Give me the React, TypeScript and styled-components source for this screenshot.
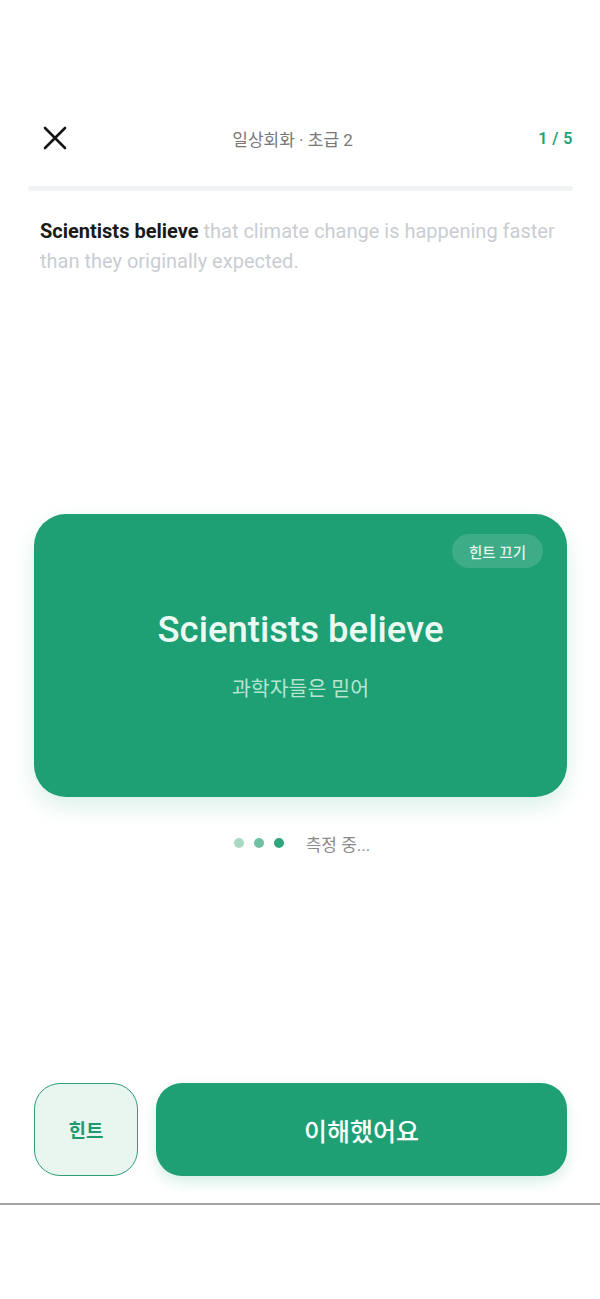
import React from "react";
import styled, { createGlobalStyle } from "styled-components";

const GREEN = "#1e9f74";
const FONT = `Roboto, "Noto Sans CJK KR", "Noto Sans", sans-serif`;

const GlobalStyle = createGlobalStyle`
  html, body {
    margin: 0;
    padding: 0;
    background: #ffffff;
  }
  body {
    font-family: ${FONT};
    -webkit-font-smoothing: antialiased;
  }
`;

// Main Component
const App: React.FC = () => {
  return (
    <Screen>
      <GlobalStyle />
      <Header>
        <CloseButton aria-label="close">
          <svg width="24" height="24" viewBox="0 0 24 24" fill="none">
            <path
              d="M2 2 L22 22 M22 2 L2 22"
              stroke="#151515"
              strokeWidth="2.6"
              strokeLinecap="round"
            />
          </svg>
        </CloseButton>
        <Title>일상회화 · 초급 2</Title>
        <Count>1 / 5</Count>
      </Header>

      <Progress>
        <ProgressFill $value={0} />
      </Progress>

      <Sentence>
        <Strong>Scientists believe</Strong> that climate change is happening
        faster than they originally expected.
      </Sentence>

      <Card>
        <CardTop>
          <Pill>힌트 끄기</Pill>
        </CardTop>
        <Phrase>Scientists believe</Phrase>
        <Meaning>과학자들은 믿어</Meaning>
      </Card>

      <Status>
        <Dots>
          <Dot $tone="#a9d9c5" />
          <Dot $tone="#6fc2a1" />
          <Dot $tone="#2ea57d" />
        </Dots>
        <StatusText>측정 중...</StatusText>
      </Status>

      <Actions>
        <HintButton>힌트</HintButton>
        <MainButton>이해했어요</MainButton>
      </Actions>

      <Divider />
    </Screen>
  );
};

export default App;

//
// --------------------- STYLED COMPONENTS ---------------------
//

const Screen = styled.div`
  width: 600px;
  height: 1299px;
  display: flex;
  flex-direction: column;
  background: #fff;
  overflow: hidden;
`;

const Header = styled.header`
  height: 60px;
  margin-top: 108px;
  padding: 0 27px 0 43px;
  display: flex;
  align-items: center;
`;

const CloseButton = styled.button`
  width: 24px;
  height: 24px;
  padding: 0;
  border: none;
  background: none;
  display: flex;
`;

const Title = styled.div`
  flex: 1;
  text-align: center;
  font-size: 17px;
  color: #777;
  padding-right: 20px;
`;

const Count = styled.div`
  font-size: 16px;
  font-weight: 600;
  color: #22a077;
  letter-spacing: 0.5px;
`;

const Progress = styled.div`
  margin: 18px 27px 0 28px;
  height: 5px;
  border-radius: 3px;
  background: #f1f2f4;
  overflow: hidden;
`;

const ProgressFill = styled.div<{ $value: number }>`
  height: 100%;
  width: ${(p) => p.$value}%;
  background: ${GREEN};
`;

const Sentence = styled.p`
  margin: 25px 36px 0 40px;
  font-size: 20px;
  line-height: 30px;
  color: #c9cdd2;
`;

const Strong = styled.span`
  color: #1a1a1a;
  font-weight: 700;
`;

const Card = styled.section`
  margin: 238px 33px 0 34px;
  height: 283px;
  box-sizing: border-box;
  padding: 20px 24px 0;
  border-radius: 32px;
  background: ${GREEN};
  box-shadow: 0 10px 22px rgba(30, 159, 116, 0.16);
  display: flex;
  flex-direction: column;
  align-items: center;
`;

const CardTop = styled.div`
  align-self: stretch;
  display: flex;
  justify-content: flex-end;
`;

const Pill = styled.span`
  height: 34px;
  padding: 0 17px;
  border-radius: 17px;
  background: rgba(255, 255, 255, 0.14);
  color: #e6f7ef;
  font-size: 14.5px;
  font-weight: 500;
  display: flex;
  align-items: center;
`;

const Phrase = styled.h2`
  margin: 41px 0 0;
  font-size: 36.5px;
  line-height: 42px;
  font-weight: 500;
  color: #eafaf3;
`;

const Meaning = styled.p`
  margin: 24px 0 0;
  font-size: 20.5px;
  line-height: 28px;
  color: #b5e6d1;
`;

const Status = styled.div`
  margin-top: 36px;
  height: 20px;
  display: flex;
  align-items: center;
  justify-content: center;
  gap: 22px;
  padding-left: 4px;
`;

const Dots = styled.div`
  display: flex;
  gap: 10px;
`;

const Dot = styled.span<{ $tone: string }>`
  width: 10px;
  height: 10px;
  border-radius: 50%;
  background: ${(p) => p.$tone};
`;

const StatusText = styled.span`
  font-size: 17px;
  color: #8a8a8a;
`;

const Actions = styled.div`
  margin-top: 230px;
  padding: 0 33px 0 34px;
  display: flex;
  gap: 18px;
  height: 93px;
`;

const HintButton = styled.button`
  width: 104px;
  box-sizing: border-box;
  border-radius: 26px;
  border: 1.5px solid #2f9f79;
  background: #e8f6ef;
  color: #1f9a70;
  font-family: ${FONT};
  font-size: 19px;
  font-weight: 700;
`;

const MainButton = styled.button`
  flex: 1;
  border: none;
  border-radius: 26px;
  background: ${GREEN};
  box-shadow: 0 6px 14px rgba(30, 159, 116, 0.18);
  color: #fff;
  font-family: ${FONT};
  font-size: 25px;
  font-weight: 500;
`;

const Divider = styled.div`
  margin-top: 27px;
  height: 2px;
  background: #a3a3a3;
`;
